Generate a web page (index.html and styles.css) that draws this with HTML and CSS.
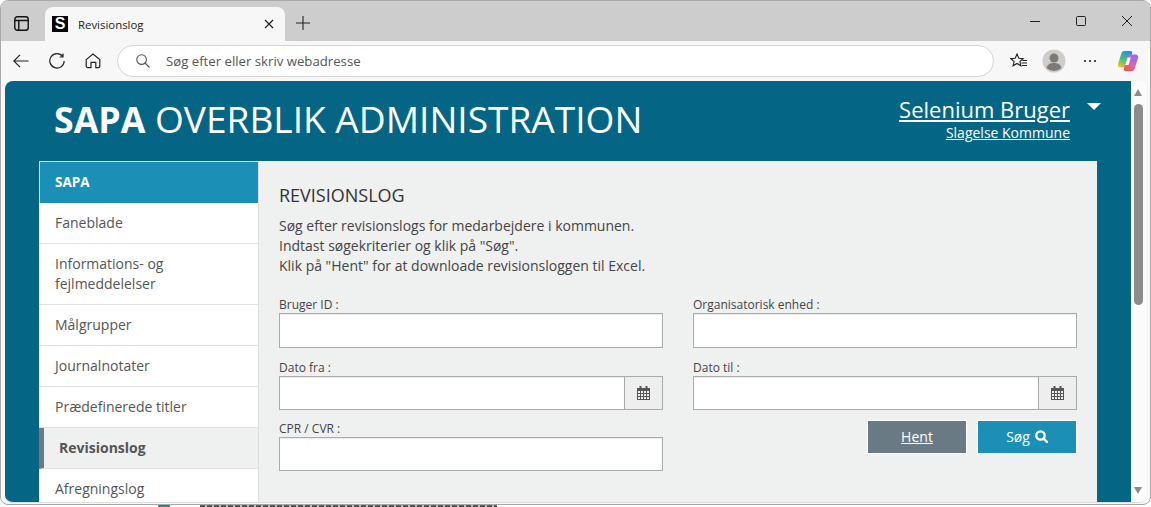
FILE: index.html
```html
<!DOCTYPE html>
<html lang="da">
<head>
    <meta charset="UTF-8">
    <title>Revisionslog</title>
    <link rel="stylesheet" href="styles.css">
</head>
<body>
<div class="window">
    <div class="tabstrip">
        <svg class="tab-actions" width="15" height="15" viewBox="0 0 15 15" fill="none" stroke="#111" stroke-width="1.4"><rect x=".8" y=".8" width="13.4" height="13.4" rx="2.500"/><path d="M.8 4.500h13.400M4.800 4.500v9.700"/></svg>
        <div class="tab">
            <span class="favicon">S</span>
            <span class="tab-title">Revisionslog</span>
            <svg width="10" height="10" viewBox="0 0 10 10" stroke="#222" stroke-width="1.2"><path d="M1 1l8 8M9 1l-8 8"/></svg>
        </div>
        <svg class="new-tab" width="14" height="14" viewBox="0 0 14 14" stroke="#222" stroke-width="1.1"><path d="M7 0v14M0 7h14"/></svg>
        <div class="window-controls">
            <svg width="10" height="10" viewBox="0 0 10 10" stroke="#222"><path d="M0 5.500h10"/></svg>
            <svg width="10" height="10" viewBox="0 0 10 10" stroke="#222" fill="none"><rect x=".5" y=".5" width="9" height="9" rx="1"/></svg>
            <svg width="10" height="10" viewBox="0 0 10 10" stroke="#222"><path d="M0 0l10 10M10 0L0 10"/></svg>
        </div>
    </div>
    <div class="toolbar">
        <svg width="16" height="14" viewBox="0 0 16 14" fill="none" stroke="#222" stroke-width="1.2"><path d="M.5 7h15M7 .8L.8 7l6.200 6.200"/></svg>
        <svg width="16" height="16" viewBox="0 0 16 16" fill="none" stroke="#222" stroke-width="1.2"><path d="M13.800 3.600A7.200 7.200 0 1 0 15.200 8M14 .6v3.400h-3.400"/></svg>
        <svg width="16" height="16" viewBox="0 0 16 16" fill="none" stroke="#222" stroke-width="1.2"><path d="M1.200 6.600L8 1l6.800 5.600V13a1.600 1.600 0 0 1-1.600 1.600h-2.400V9.400H6v5.200H2.800A1.600 1.600 0 0 1 1.200 13z"/></svg>
        <div class="addressbar">
            <svg width="14" height="14" viewBox="0 0 14 14" fill="none" stroke="#555" stroke-width="1.1"><circle cx="5.600" cy="5.600" r="4.800"/><path d="M9 9l4.500 4.500"/></svg>
            <span>Søg efter eller skriv webadresse</span>
        </div>
        <svg class="tool-star" width="18" height="16" viewBox="0 0 18 16" fill="none" stroke="#222" stroke-width="1.1"><path d="M7 1l1.800 4.200 4.400.4-3.300 2.900 1 4.300L7 10.500l-3.900 2.300 1-4.300L.8 5.600l4.400-.4zM12.500 7.500H17M11.500 10H17M12 12.500h5"/></svg>
        <svg class="tool-avatar" width="24" height="24" viewBox="0 0 24 24"><circle cx="12" cy="12" r="11.500" fill="#cfcdca"/><circle cx="12" cy="9" r="4.500" fill="#7d7a77"/><path d="M4.500 19c1-4 4-5 7.500-5s6.500 1 7.500 5a11 11 0 0 1-15 0z" fill="#7d7a77"/></svg>
        <svg class="tool-more" width="14" height="4" viewBox="0 0 14 4" fill="#222"><circle cx="2" cy="2" r="1.100"/><circle cx="7" cy="2" r="1.100"/><circle cx="12" cy="2" r="1.100"/></svg>
        <svg class="tool-copilot" width="22" height="22" viewBox="0 0 22 22">
            <defs>
                <linearGradient id="cpA" x1=".7" y1="0" x2=".2" y2="1"><stop offset="0" stop-color="#1f8fec"/><stop offset=".5" stop-color="#38c27f"/><stop offset="1" stop-color="#f3c22e"/></linearGradient>
                <linearGradient id="cpB" x1=".8" y1="0" x2=".2" y2="1"><stop offset="0" stop-color="#8f6cf2"/><stop offset=".55" stop-color="#dc5fc0"/><stop offset="1" stop-color="#f2583c"/></linearGradient>
            </defs>
            <path d="M7 1h6.500c1.500 0 2 1 1.600 2.200L11.500 15c-.7 2-2 2.500-3.500 2.500H3.500C1.500 17.500.4 16 1 14L4 4.500C4.600 2.500 5.500 1 7 1z" fill="url(#cpA)"/>
            <path d="M11 4.500h7.500c2 0 3.100 1.500 2.500 3.500L18 17.500c-.6 2-1.500 3.500-3 3.500H8.500c-1.500 0-2-1-1.600-2.200L10.500 7c.1-.9.200-2.500.5-2.500z" fill="url(#cpB)"/>
            <path d="M10.500 7.500h3.300L11.500 15H8.200z" fill="#fff"/>
        </svg>
    </div>
    <div class="viewport">
        <div class="page">
            <header class="page-header">
                <h1><strong>SAPA</strong> OVERBLIK ADMINISTRATION</h1>
                <div class="user">
                    <a href="#" class="user-name">Selenium Bruger</a>
                    <a href="#" class="user-org">Slagelse Kommune</a>
                </div>
                <span class="user-caret"></span>
            </header>
            <div class="main">
                <nav class="sidebar">
                    <a href="#" class="nav-head">SAPA</a>
                    <a href="#">Faneblade</a>
                    <a href="#">Informations- og fejlmeddelelser</a>
                    <a href="#">Målgrupper</a>
                    <a href="#">Journalnotater</a>
                    <a href="#">Prædefinerede titler</a>
                    <a href="#" class="nav-active">Revisionslog</a>
                    <a href="#">Afregningslog</a>
                </nav>
                <section class="content">
                    <h2>REVISIONSLOG</h2>
                    <p>Søg efter revisionslogs for medarbejdere i kommunen.<br>Indtast søgekriterier og klik på "Søg".<br>Klik på "Hent" for at downloade revisionsloggen til Excel.</p>
                    <form class="search-form">
                        <div class="field field-tall">
                            <label>Bruger ID :</label>
                            <input type="text">
                        </div>
                        <div class="field field-tall">
                            <label>Organisatorisk enhed :</label>
                            <input type="text">
                        </div>
                        <div class="field date-field">
                            <label>Dato fra :</label>
                            <div class="date-input">
                                <input type="text">
                                <span class="date-btn"><svg width="13" height="14" viewBox="0 0 13 14"><use href="#cal"/></svg></span>
                            </div>
                        </div>
                        <div class="field date-field">
                            <label>Dato til :</label>
                            <div class="date-input">
                                <input type="text">
                                <span class="date-btn"><svg width="13" height="14" viewBox="0 0 13 14"><use href="#cal"/></svg></span>
                            </div>
                        </div>
                        <div class="field">
                            <label>CPR / CVR :</label>
                            <input type="text">
                        </div>
                        <div class="form-actions">
                            <a href="#" class="btn btn-grey">Hent</a>
                            <a href="#" class="btn btn-blue">Søg
                                <svg width="13" height="13" viewBox="0 0 13 13" fill="none" stroke="#fff" stroke-width="2.300"><circle cx="5.500" cy="5.500" r="4.200"/><path d="M8.600 8.600l3.300 3.300" stroke-linecap="round"/></svg>
                            </a>
                        </div>
                    </form>
                </section>
            </div>
        </div>
        <div class="scrollbar">
            <span class="sb-up"></span>
            <span class="sb-thumb"></span>
            <span class="sb-down"></span>
        </div>
    </div>
</div>
<div class="behind">
    <span class="behind-icon"></span>
    <span class="behind-line"></span>
</div>
<svg width="0" height="0" class="defs">
    <symbol id="cal" viewBox="0 0 13 14">
        <path fill="#555" d="M0 2h2.500V0h2v2h4V0h2v2H13v12H0zM1 5v2h2V5zm3 0v2h2V5zm3 0v2h2V5zm3 0v2h2V5zM1 8v2h2V8zm3 0v2h2V8zm3 0v2h2V8zm3 0v2h2V8zM1 11v2h2v-2zm3 0v2h2v-2zm3 0v2h2v-2zm3 0v2h2v-2z"/>
    </symbol>
</svg>
</body>
</html>
```

FILE: styles.css
```css
* {
    box-sizing: border-box;
}

html, body {
    margin: 0;
    height: 100%;
    overflow: hidden;
    background-color: #fff;
}

.defs {
    display: block;
    height: 0;
}

.window {
    height: 505px;
    display: flex;
    flex-direction: column;
    background-color: #f7f7f7;
    border: 1px solid #a9a9a9;
    border-radius: 8px;
    overflow: hidden;
    font-family: "Noto Sans", sans-serif;
}

/* the bit of the page behind the window */
.behind {
    height: 2px;
    display: flex;
    padding-left: 158px;
}

.behind-icon {
    width: 12px;
    background-color: #3b7f94;
}

.behind-line {
    width: 297px;
    margin-left: 30px;
    background: repeating-linear-gradient(90deg, #555 0 5px, #bbb 5px 7px);
}

/* browser chrome */
.tabstrip {
    height: 40px;
    flex: none;
    display: flex;
    align-items: flex-end;
    background-color: #cdcdcd;
    padding-left: 44px;
    position: relative;
}

.tab-actions {
    position: absolute;
    left: 13px;
    top: 15px;
}

.tab {
    width: 240px;
    height: 34px;
    background-color: #f7f7f7;
    border-radius: 8px 8px 0 0;
    display: flex;
    align-items: center;
    padding: 0 11px 0 7px;
    font-family: "Open Sans", sans-serif;
    font-size: 11.4px;
    color: #222;
}

.favicon {
    width: 16px;
    height: 16px;
    background-color: #000;
    color: #fff;
    font: bold 16px/16px "Liberation Sans", sans-serif;
    text-align: center;
    margin-right: 10px;
}

.tab-title {
    flex: 1;
}

.new-tab {
    margin: 0 0 11px 11px;
}

.window-controls {
    margin-left: auto;
    height: 100%;
    display: flex;
    align-items: center;
    gap: 36px;
    padding-right: 18px;
}

.toolbar {
    height: 40px;
    flex: none;
    display: flex;
    align-items: center;
    padding-left: 12px;
    background-color: #f7f7f7;
    gap: 20px;
}

.addressbar {
    width: 877px;
    height: 32px;
    flex: none;
    margin-left: -4px;
    background-color: #fff;
    border: 1px solid #d4d4d4;
    border-radius: 16px;
    display: flex;
    align-items: center;
    padding-left: 18px;
    gap: 16px;
    font-family: "Open Sans", sans-serif;
    font-size: 13.2px;
    color: #555;
}

.toolbar svg {
    flex: none;
}

.tool-star {
    margin-left: -4px;
}

.tool-avatar {
    margin-left: -6px;
}

.tool-more {
    margin-left: -3px;
}

/* page */
.viewport {
    flex: 1;
    min-height: 0;
    margin: 0 4px 1px;
    display: flex;
    border-bottom: 1px solid #dedede;
    border-radius: 8px;
    overflow: hidden;
    background-color: #fff;
}

.page {
    flex: 1;
    background-color: #056584;
    overflow: hidden;
    padding-right: 34px;
}

.page-header {
    height: 80px;
    display: flex;
    align-items: flex-start;
    color: #fff;
}

.page-header h1 {
    margin: 13px 0 0 49px;
    font-size: 37.100px;
    line-height: 50px;
    font-weight: 400;
    flex: 1;
    font-family: "Open Sans", sans-serif;
    white-space: nowrap;
}

.page-header h1 strong {
    font-size: 35.700px;
    font-weight: 700;
}

.user {
    margin-top: 14px;
    display: flex;
    flex-direction: column;
    align-items: flex-end;
    font-family: "Open Sans", sans-serif;
}

.user a {
    color: #fff;
}

.user-name {
    font-size: 22px;
    line-height: 29px;
}

.user-org {
    font-size: 14px;
    line-height: 18px;
}

.user-caret {
    width: 0;
    height: 0;
    margin: 22px -4px 0 17px;
    border-left: 7px solid transparent;
    border-right: 7px solid transparent;
    border-top: 7px solid #fff;
}

.main {
    display: flex;
    margin-left: 34px;
    background-color: #eff0f0;
    height: 500px;
    font-family: "Open Sans", sans-serif;
}

.sidebar {
    width: 220px;
    flex: none;
    background-color: #fff;
    border-right: 1px solid #dcdcdc;
    display: flex;
    flex-direction: column;
}

.sidebar a {
    display: block;
    padding: 10px 15px 10px 16px;
    border-bottom: 1px solid #e2e2e2;
    font-size: 14px;
    line-height: 20px;
    color: #555;
    text-decoration: none;
}

.sidebar .nav-head {
    background-color: #1b8fb6;
    border: 1px solid #cfe3ea;
    border-width: 1px 0 0 1px;
    padding-left: 15px;
    color: #fff;
    font-weight: 700;
    font-size: 13.500px;
    height: 42px;
}

.sidebar .nav-active {
    background-color: #eff0f0;
    border-left: 5px solid #6a7a84;
    padding-left: 15px;
    font-weight: 700;
}

.content {
    flex: 1;
    padding: 22px 20px 0;
    color: #444;
}

.content h2 {
    margin: 0 0 9px;
    font-size: 18px;
    line-height: 24px;
    font-weight: 400;
    color: #333;
}

.content p {
    margin: 0 0 20px;
    font-size: 14px;
    line-height: 20px;
}

.search-form {
    display: grid;
    grid-template-columns: 384px 384px;
    column-gap: 30px;
    row-gap: 10px;
}

.field {
    min-height: 52px;
}

.field label {
    display: block;
    font-size: 12px;
    line-height: 17px;
}

.field input {
    display: block;
    width: 100%;
    height: 34px;
    border: 1px solid #aaa;
    background-color: #fff;
    box-shadow: inset 0 1px 1px rgba(0, 0, 0, 0.08);
    outline: none;
    padding: 0;
}

.field-tall input {
    height: 35px;
}

.date-field {
    padding-top: 1px;
}

.date-input {
    display: flex;
}

.date-input input {
    flex: 1;
    min-width: 0;
}

.date-btn {
    width: 38px;
    height: 34px;
    border: 1px solid #aaa;
    border-left: none;
    background-color: #eee;
    display: flex;
    align-items: center;
    justify-content: center;
}

.form-actions {
    display: flex;
    justify-content: flex-end;
    gap: 10px;
}

.btn {
    height: 34px;
    width: 100px;
    padding-bottom: 2px;
    border: 1px solid #fff;
    color: #fff;
    font-size: 14px;
    display: flex;
    align-items: center;
    justify-content: center;
    gap: 5px;
}

.btn-grey {
    background-color: #6a7a84;
}

.btn-blue {
    background-color: #1b8fb6;
    text-decoration: none;
}

/* scrollbar */
.scrollbar {
    width: 15px;
    flex: none;
    background-color: #fbfbfb;
    position: relative;
}

.sb-up, .sb-down {
    position: absolute;
    left: 3px;
    width: 0;
    height: 0;
    border-left: 4.500px solid transparent;
    border-right: 4.500px solid transparent;
}

.sb-up {
    top: 8px;
    border-bottom: 7px solid #8c8c8c;
}

.sb-down {
    bottom: 8px;
    border-top: 7px solid #8c8c8c;
}

.sb-thumb {
    position: absolute;
    left: 3px;
    top: 23px;
    width: 9px;
    height: 201px;
    border-radius: 5px;
    background-color: #8c8c8c;
}
```
